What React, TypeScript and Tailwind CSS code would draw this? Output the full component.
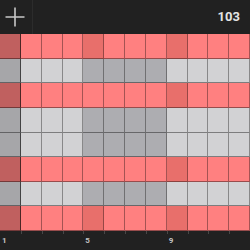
const ROWS: { kind: "red" | "gray"; accents: number[] }[] = [
  { kind: "red", accents: [4, 8] },
  { kind: "gray", accents: [] },
  { kind: "red", accents: [8] },
  { kind: "gray", accents: [] },
  { kind: "gray", accents: [] },
  { kind: "red", accents: [8] },
  { kind: "gray", accents: [] },
  { kind: "red", accents: [4, 8] },
];

const COLS = Array.from({ length: 12 }, (_, i) => i);

function cellColor(kind: "red" | "gray", col: number, accent: boolean) {
  if (kind === "red") {
    if (col === 0) return "bg-[#c0605f]";
    return accent ? "bg-[#e86f6b]" : "bg-[#ff8080]";
  }
  if (col === 0) return "bg-[#a6a6a9]";
  return col >= 4 && col <= 7 ? "bg-[#adadb1]" : "bg-[#d2d2d4]";
}

function PlusIcon() {
  return (
    <svg width="20" height="20" viewBox="0 0 20 20">
      <path d="M10 0.5V19.5M0.5 10H19.5" stroke="#c8c8c8" strokeWidth="1.6" />
    </svg>
  );
}

export default function App() {
  return (
    <div className="flex h-[250px] w-[250px] flex-col bg-[#212121] font-['Roboto',sans-serif]">
      <div className="flex h-[34px] items-center">
        <div className="flex h-full w-[33px] items-center border-r border-[#2c2c2c] pl-[5px]">
          <PlusIcon />
        </div>
        <div className="flex-1" />
        <span className="pr-[10px] text-[13px] font-bold text-[#e4e4e4]">103</span>
      </div>

      <div className="grid flex-1 grid-cols-12 grid-rows-8">
        {ROWS.map((row, r) =>
          COLS.map((c) => (
            <div
              key={`${r}-${c}`}
              className={`border-b border-r ${c === 0 ? "border-r-black/60" : "border-r-black/35"} border-b-black/40 ${cellColor(row.kind, c, row.accents.includes(c))}`}
            />
          ))
        )}
      </div>

      <div className="grid h-[19px] grid-cols-12">
        {COLS.map((c) => (
          <div key={c} className="relative">
            <div className="absolute right-[-1px] top-0 h-[3px] w-px bg-[#484848]" />
            {c % 4 === 0 && (
              <span className="absolute left-[2px] top-[6px] text-[8px] font-bold leading-none text-[#c4c4c4]">
                {c + 1}
              </span>
            )}
          </div>
        ))}
      </div>
    </div>
  );
}
